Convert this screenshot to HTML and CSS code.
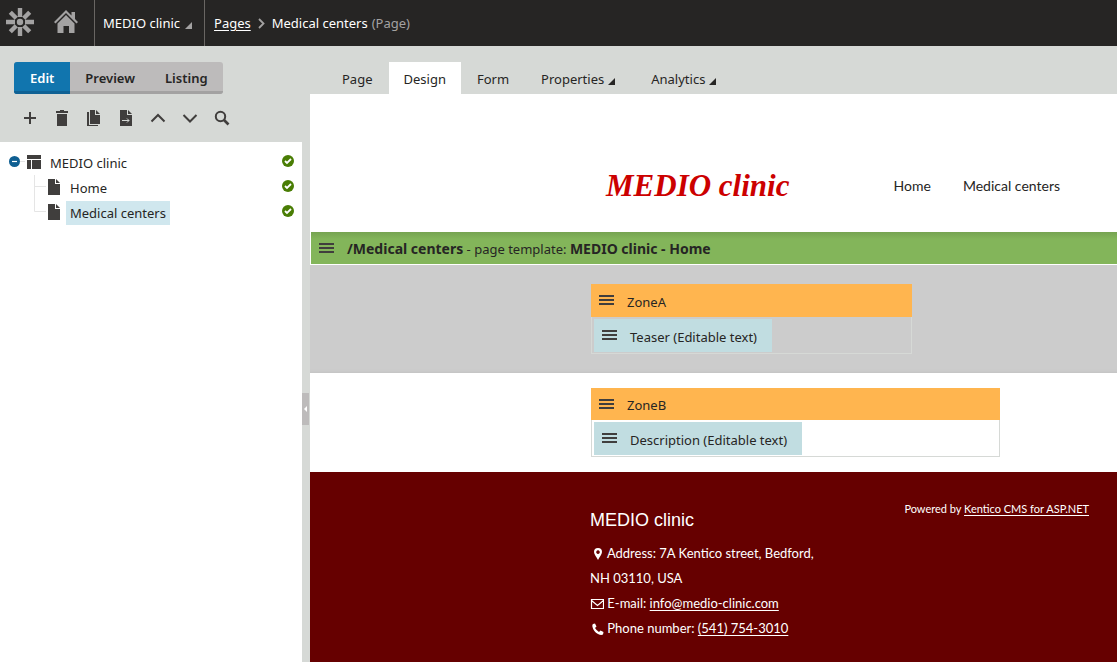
FILE: index.html
```html
<!DOCTYPE html>
<html lang="en">
<head>
<meta charset="utf-8">
<title>MEDIO clinic - Medical centers</title>
<link rel="stylesheet" href="styles.css">
</head>
<body>
<svg class="defs" aria-hidden="true">
  <symbol id="burger" viewBox="0 0 15 12"><path d="M0 1h15v2H0zM0 5h15v2H0zM0 9h15v2H0z"/></symbol>
  <symbol id="doc" viewBox="0 0 16 16"><path d="M2 0h7v5h5v11H2zM10 0l4 4h-4z"/></symbol>
  <symbol id="corner" viewBox="0 0 7 7"><path d="M7 0v7H0z"/></symbol>
  <symbol id="check" viewBox="0 0 12 12"><circle cx="6" cy="6" r="6" fill="#497d04"/><path d="M3 6l2 2 4-4" fill="none" stroke="#fff" stroke-width="1.8"/></symbol>
</svg>
<header class="topbar">
  <a class="logo" href="#" aria-label="Kentico">
    <svg width="30" height="30" viewBox="-15 -15 30 30">
      <g stroke="#a3a2a2" stroke-width="4.400">
        <path d="M0-5V-14M0 5V14M-5 0H-14M5 0H14M3.700-3.700L9.700-9.700M-3.700-3.700L-9.700-9.700M3.700 3.700L9.700 9.700M-3.700 3.700L-9.700 9.700"/>
      </g>
      <circle r="3.200" fill="#a3a2a2"/>
    </svg>
  </a>
  <a class="home" href="#" aria-label="Dashboard">
    <svg width="24" height="24" viewBox="0 0 24 24" fill="#a3a2a2"><path d="M12 0L0 12l1.500 1.500L12 3l10.500 10.500L24 12l-3-3V2h-3.500v3.500z"/><path d="M12 5l8.500 8.500V23H15v-7H9.500v7H3.500v-9.500z"/></svg>
  </a>
  <button class="site">MEDIO clinic <svg class="corner" width="7" height="7"><use href="#corner"/></svg></button>
  <nav class="crumbs" aria-label="Breadcrumb">
    <a href="#">Pages</a>
    <svg width="7" height="11" viewBox="0 0 7 11"><path d="M1 1l4.500 4.500L1 10" fill="none" stroke="#a3a2a2" stroke-width="1.800"/></svg>
    <span>Medical centers</span><span class="kind">(Page)</span>
  </nav>
</header>
<div class="work">
  <aside class="side">
    <div class="side-head">
      <div class="modes"><button class="on">Edit</button><button>Preview</button><button>Listing</button></div>
      <div class="tools">
        <button aria-label="New"><svg viewBox="0 0 16 16"><path d="M2 8h12M8 2v12" stroke-width="2"/></svg></button>
        <button aria-label="Delete"><svg class="solid" viewBox="0 0 16 16"><path d="M6 0h4v1h4v2H2V1h4zM3 4h10v12H3z"/></svg></button>
        <button aria-label="Copy"><svg class="solid" viewBox="0 0 16 16"><path d="M4 0h5v5h5v9H4zM10 0l4 4h-4zM1 2h2v13h9v1H1z"/></svg></button>
        <button aria-label="Move"><svg class="solid" viewBox="0 0 16 16"><path d="M2 0h7v5h5v11H2zM10 0l4 4h-4z"/><path d="M4 10.500h7M9 8.500l2 2-2 2" stroke="#d6d9d6" stroke-width="1" fill="none"/></svg></button>
        <button aria-label="Up"><svg viewBox="0 0 16 16"><path d="M1.500 11.500L8 5l6.500 6.500" stroke-width="2"/></svg></button>
        <button aria-label="Down"><svg viewBox="0 0 16 16"><path d="M1.500 5L8 11.500 14.500 5" stroke-width="2"/></svg></button>
        <button aria-label="Search"><svg viewBox="0 0 16 16"><circle cx="6.500" cy="6.500" r="4.700" stroke-width="2"/><path d="M10 10l4.500 4.500" stroke-width="2.600"/></svg></button>
      </div>
    </div>
    <ul class="tree">
      <li class="node">
        <button class="toggle" aria-label="Collapse"><svg width="11" height="11" viewBox="0 0 11 11"><circle cx="5.500" cy="5.500" r="5.500" fill="#0f5f92"/><path d="M3 5.500h5" stroke="#fff" stroke-width="1.200"/></svg></button>
        <svg class="stub" width="5" height="1"><path d="M0 0h5v1H0z"/></svg>
        <svg class="glyph" width="16" height="16" viewBox="0 0 16 16"><path d="M1 1h14v4H1zM1 6h4v9H1zM6 6h9v9H6z"/></svg>
        <a href="#">MEDIO clinic</a>
        <svg class="ok" width="12" height="12"><use href="#check"/></svg>
      </li>
      <li class="node child">
        <svg class="branch" width="12" height="25"><path d="M.5 0v25M0 11.500h12"/></svg>
        <svg class="glyph" width="16" height="16"><use href="#doc"/></svg>
        <a href="#">Home</a>
        <svg class="ok" width="12" height="12"><use href="#check"/></svg>
      </li>
      <li class="node child">
        <svg class="branch" width="12" height="25"><path d="M.5 0v11.500H12"/></svg>
        <svg class="glyph" width="16" height="16"><use href="#doc"/></svg>
        <a class="current" href="#">Medical centers</a>
        <svg class="ok" width="12" height="12"><use href="#check"/></svg>
      </li>
    </ul>
  </aside>
  <div class="splitter"><button aria-label="Collapse panel"><svg width="3" height="6" viewBox="0 0 3 6"><path d="M3 0v6L0 3z" fill="#fff"/></svg></button></div>
  <main class="main">
    <nav class="tabs">
      <a href="#">Page</a><a class="on" href="#">Design</a><a href="#">Form</a>
      <a href="#">Properties <svg class="corner" width="7" height="7"><use href="#corner"/></svg></a>
      <a href="#">Analytics <svg class="corner" width="7" height="7"><use href="#corner"/></svg></a>
    </nav>
    <div class="site-head">
      <div class="brand">MEDIO clinic</div>
      <nav class="site-nav"><a href="#">Home</a><a href="#">Medical centers</a></nav>
    </div>
    <div class="template">
      <button class="menu" aria-label="Template menu"><svg width="15" height="12"><use href="#burger"/></svg></button>
      <p><b>/Medical centers</b> - page template: <b>MEDIO clinic - Home</b></p>
    </div>
    <section class="band grey">
      <div class="zone zone-a">
        <div class="zone-title"><button class="menu" aria-label="Zone menu"><svg width="15" height="12"><use href="#burger"/></svg></button>ZoneA</div>
        <div class="zone-body"><div class="widget"><button class="menu" aria-label="Widget menu"><svg width="15" height="12"><use href="#burger"/></svg></button>Teaser (Editable text)</div></div>
      </div>
    </section>
    <section class="band">
      <div class="zone zone-b">
        <div class="zone-title"><button class="menu" aria-label="Zone menu"><svg width="15" height="12"><use href="#burger"/></svg></button>ZoneB</div>
        <div class="zone-body"><div class="widget"><button class="menu" aria-label="Widget menu"><svg width="15" height="12"><use href="#burger"/></svg></button>Description (Editable text)</div></div>
      </div>
    </section>
    <footer class="foot">
      <address>
        <h2>MEDIO clinic</h2>
        <p><svg viewBox="0 0 14 12"><path d="M8 0a4 4 0 0 1 4 4c0 2-2.500 5-4 8-1.500-3-4-6-4-8a4 4 0 0 1 4-4zM8 2.300a1.800 1.800 0 1 0 .01 0z" fill-rule="evenodd"/></svg> Address: 7A Kentico street, Bedford, NH 03110, USA</p>
        <p><svg viewBox="0 0 14 12"><path d="M1.500 1.500h12v9h-12zM1.500 2.500l6 5 6-5" fill="none" stroke="#fff" stroke-width="1.200"/></svg> E-mail: <a href="#">info@medio-clinic.com</a></p>
        <p><svg viewBox="0 0 14 12"><path d="M3 1l2-.5 1.500 3L5 5q1.500 2.500 4 4l1.500-1.500 3 1.500-.5 2.500Q11 12.500 8 11 3.500 8.500 2.500 4 2 2 3 1z"/></svg> Phone number: <a href="#">(541) 754-3010</a></p>
      </address>
      <p class="powered">Powered by <a href="#">Kentico CMS for ASP.NET</a></p>
    </footer>
  </main>
</div>
</body>
</html>
```

FILE: styles.css
```css
* { box-sizing: border-box; }
body { margin: 0; min-height: 100vh; display: flex; flex-direction: column; background: #fff; color: #262524; font: 13px/20px "Noto Sans", "Open Sans", sans-serif; }
button { margin: 0; padding: 0; border: 0; background: none; color: inherit; font: inherit; cursor: pointer; }
a { color: inherit; text-decoration: none; }
p, h2, ul { margin: 0; padding: 0; }
svg { flex: none; }
.defs { display: none; }

.topbar { display: flex; align-items: stretch; height: 46px; background: #262524; color: #fff; }
.logo, .home { display: flex; align-items: center; padding-bottom: 2px; }
.logo { padding-left: 5px; }
.home { padding-left: 19px; padding-right: 16px; }
.site { display: flex; align-items: center; gap: 5px; padding: 0 12px 0 8px; border: solid #696663; border-width: 0 1px; }
.corner { fill: currentColor; margin-top: 5px; }
.site .corner { color: #a3a2a2; }
.crumbs { display: flex; align-items: center; gap: 7px; padding-left: 9px; }
.crumbs a { text-decoration: underline; text-underline-offset: 2px; }
.kind { color: #a3a2a2; margin-left: -3px; }

.work { flex: 1; display: flex; }
.side { flex: none; width: 302px; display: flex; flex-direction: column; }
.side-head { height: 96px; padding: 16px 14px 0; background: #d6d9d6; }
.modes { display: inline-flex; height: 32px; border-radius: 3px; overflow: hidden; background: #bdbbbb; font-weight: 600; }
.modes button { padding: 2px 15px 0; border-bottom: 3px solid #a3a2a2; }
.modes .on { padding: 2px 16px 0; background: #1175ae; border-color: #0f6194; color: #fff; }
.tools { display: flex; gap: 16px; padding: 16px 8px; }
.tools button { width: 16px; height: 16px; }
.tools svg { display: block; width: 16px; height: 16px; fill: none; stroke: #403e3d; }
.tools .solid { fill: #403e3d; stroke: none; }
.tree { list-style: none; padding-top: 8px; }
.node { display: flex; align-items: center; height: 25px; padding: 0 8px 0 9px; }
.node a { padding: 2px 4px; margin-left: 4px; }
.toggle { width: 11px; height: 11px; margin-bottom: 2px; }
.toggle svg { display: block; }
.child { padding-left: 34px; }
.glyph { fill: #403e3d; margin-left: 1px; margin-bottom: 2px; }
.child .glyph { margin-left: 0; }
.stub { fill: #e5e5e5; margin-bottom: 2px; }
.branch { fill: none; stroke: #e5e5e5; }
.ok { margin-left: auto; margin-bottom: 3px; }
.node .current { background: #d0e7ee; }
.splitter { flex: none; width: 8px; display: flex; align-items: center; background: #d6d9d6; padding-top: 110px; }
.splitter button { display: flex; align-items: center; justify-content: center; width: 7px; height: 32px; background: #bdbbbb; }

.main { flex: 1; min-width: 0; display: flex; flex-direction: column; }
.tabs { display: flex; height: 48px; padding: 16px 16px 0; background: #d6d9d6; }
.tabs a { display: flex; align-items: center; gap: 4px; padding: 2px 16px 0; }
.tabs .on { padding: 2px 15px 0; background: #fff; }
.tabs a:nth-child(4) { padding-right: 20px; }
.site-head { display: flex; align-items: center; justify-content: space-between; height: 138px; padding: 46px 57px 0 296px; }
.brand { color: #c00; font: italic bold 31px/44px "Liberation Serif", serif; white-space: nowrap; }
.site-nav { display: flex; gap: 32px; font: 14px/20px Lato, sans-serif; white-space: nowrap; }
.template { display: flex; align-items: center; height: 33px; padding-left: 8px; border: solid #fff; border-width: 0 0 1px 1px; background: #83b55a linear-gradient(#76a351, #83b55a 7px) no-repeat; }
.template p { padding-top: 2px; }
.template b { font-size: 14px; }
.menu { display: block; width: 15px; height: 12px; margin-right: 13px; }
.menu svg { display: block; fill: #403e3d; }
.band { padding: 15px 16px 15px 281px; }
.grey { background: #ccc; padding-top: 19px; padding-bottom: 19px; box-shadow: inset 0 -4px 3px -3px #c3c3c3; }
.zone-a { max-width: 321px; }
.zone-b { max-width: 409px; }
.zone-title { display: flex; align-items: center; height: 33px; padding: 2px 0 0 8px; background: #ffb54f; }
.zone-b .zone-title { height: 32px; }
.zone-body { height: 37px; padding: 2px; border: 1px solid #d6d9d6; border-top: 0; }
.widget { display: inline-flex; align-items: center; height: 33px; padding: 2px 15px 0 8px; background: #c1dde1; }
.zone .menu { margin-bottom: 3px; }
.foot { flex: 1; display: flex; justify-content: space-between; padding: 28px 28px 20px 280px; background: #600; color: #fff; font: 13px/25px Lato, sans-serif; }
address { width: 240px; font-style: normal; }
address h2 { font: 18px/41px "Liberation Sans", sans-serif; }
address svg { width: 14px; height: 12px; fill: #fff; vertical-align: -2px; }
.foot a { text-decoration: underline; text-underline-offset: 2px; }
.powered { font-size: 11px; line-height: 18px; white-space: nowrap; }
```
